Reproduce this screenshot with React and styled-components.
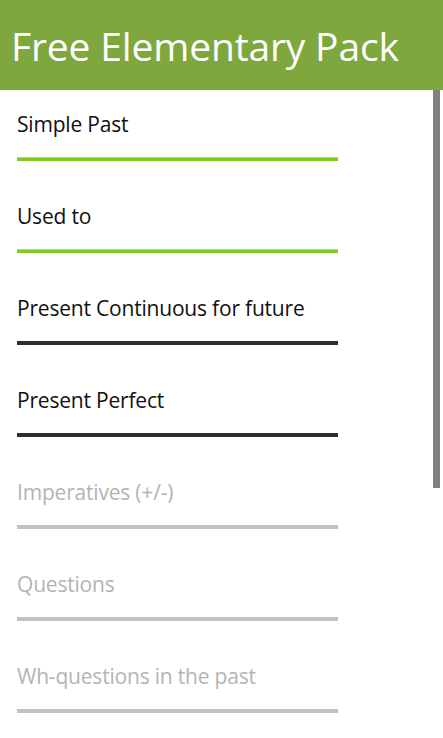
import React from 'react'
import styled, { createGlobalStyle } from 'styled-components'

const GlobalStyle = createGlobalStyle`
  html, body {
    margin: 0;
    padding: 0;
    background: #ffffff;
  }
  body {
    font-family: "Open Sans", "Noto Sans", sans-serif;
  }
`;

const Screen = styled.div`
  position: relative;
  width: 443px;
  height: 738px;
  overflow: hidden;
  background: #ffffff;
  display: flex;
  flex-direction: column;
`;

const Header = styled.header`
  height: 90px;
  flex-shrink: 0;
  background: #7ea83e;
  display: flex;
  align-items: center;
  padding-left: 11px;
  box-sizing: border-box;
`;

const Title = styled.h1`
  margin: 0;
  color: #ffffff;
  font-weight: 400;
  font-size: 39px;
  letter-spacing: -0.15px;
  line-height: 46px;
  padding-top: 2px;
`;

const List = styled.ul`
  margin: 0;
  padding: 0;
  list-style: none;
`;

const Item = styled.li`
  padding: 20px 0 21px 17px;
  width: 321px;
`;

const Label = styled.div`
  font-size: 21px;
  line-height: 28px;
  letter-spacing: -0.2px;
  color: ${p => (p.$state === 'locked' ? '#b4b4b4' : '#111111')};
  white-space: nowrap;
`;

const Bar = styled.div`
  margin-top: 19px;
  height: 4px;
  background: ${p =>
    p.$state === 'done'
      ? 'linear-gradient(#a6e26a 0 1px, #7dcc1e 1px)'
      : p.$state === 'open'
      ? '#2e2e2e'
      : '#c2c2c2'};
`;

const ScrollThumb = styled.div`
  position: absolute;
  top: 90px;
  right: 3px;
  width: 7px;
  height: 398px;
  background: #808080;
`;

const lessons = [
  { name: 'Simple Past', state: 'done' },
  { name: 'Used to', state: 'done' },
  { name: 'Present Continuous for future', state: 'open' },
  { name: 'Present Perfect', state: 'open' },
  { name: 'Imperatives (+/-)', state: 'locked' },
  { name: 'Questions', state: 'locked' },
  { name: 'Wh-questions in the past', state: 'locked' },
];

function App() {
  return (
    <Screen>
      <GlobalStyle />
      <Header>
        <Title>Free Elementary Pack</Title>
      </Header>
      <List>
        {lessons.map(l => (
          <Item key={l.name}>
            <Label $state={l.state}>{l.name}</Label>
            <Bar $state={l.state} />
          </Item>
        ))}
      </List>
      <ScrollThumb />
    </Screen>
  )
}

export default App
